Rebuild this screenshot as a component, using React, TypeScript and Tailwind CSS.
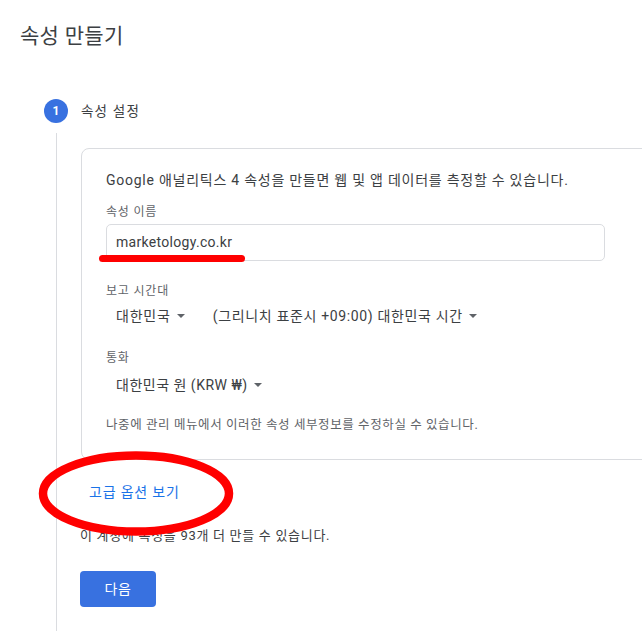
import React from 'react'

const font = { fontFamily: 'Roboto, "Noto Sans CJK KR", sans-serif' }

function Caret() {
  return (
    <svg width="8" height="4" viewBox="0 0 8 4" className="ml-1.5 inline-block">
      <path d="M0 0 L8 0 L4 4 Z" fill="#5f6368" />
    </svg>
  )
}

export default function App() {
  return (
    <div
      className="relative w-[642px] h-[631px] overflow-hidden bg-white text-[#202124]"
      style={font}
    >
      <h1 className="pl-5 pt-[22px] text-[21px] leading-[28px] tracking-[0.3px] font-normal text-[#3c4043]">
        속성 만들기
      </h1>

      <div className="flex mt-[49px]">
        <div className="ml-[44px] w-6 flex flex-col items-center">
          <div className="w-6 h-6 rounded-full bg-[#3871e0] text-white text-[12px] font-bold flex items-center justify-center">
            1
          </div>
          <div className="mt-2.5 w-px h-[500px] bg-[#dadce0]" />
        </div>

        <div className="ml-[13px] flex-1">
          <div className="h-6 flex items-center text-[13.5px] tracking-[1.2px] text-[#3c4043]">속성 설정</div>

          <div className="mt-[25px] w-[600px] border border-[#dadce0] rounded-tl-lg rounded-bl-lg pl-6 pt-[21px] pb-[26px]">
            <p className="text-[14px] leading-5 tracking-[0.75px] text-[#3c4043]">
              Google 애널리틱스 4 속성을 만들면 웹 및 앱 데이터를 측정할 수 있습니다.
            </p>

            <div className="mt-[14px] text-[12px] leading-4 tracking-[0.8px] text-[#5f6368]">속성 이름</div>
            <div className="relative mt-[4px] w-[499px] h-[37px] border border-[#dadce0] rounded-[5px] flex items-center pl-[9px] text-[14px] tracking-[0.3px] text-[#3c4043]">
              marketology.co.kr
              <div className="absolute left-[-8px] top-[30px] w-[146px] h-[7px] rounded-full bg-[#ff0000]" />
            </div>

            <div className="mt-[22px] text-[12px] leading-4 tracking-[0.8px] text-[#5f6368]">보고 시간대</div>
            <div className="mt-[7px] flex items-center pl-[10px] text-[14px] leading-5 text-[#3c4043]">
              <span className="tracking-[0.8px]">대한민국</span>
              <Caret />
              <span className="ml-[28px] tracking-[0.65px]">(그리니치 표준시 +09:00) 대한민국 시간</span>
              <Caret />
            </div>

            <div className="mt-[24px] text-[12px] leading-4 tracking-[0.8px] text-[#5f6368]">통화</div>
            <div className="mt-[9px] flex items-center pl-[10px] text-[14px] leading-5 text-[#3c4043]">
              <span className="tracking-[0.5px]">대한민국 원 (KRW ₩)</span>
              <Caret />
            </div>

            <p className="mt-[22px] text-[12.5px] leading-4 tracking-[0.6px] text-[#5f6368]">
              나중에 관리 메뉴에서 이러한 속성 세부정보를 수정하실 수 있습니다.
            </p>
          </div>

          <div className="mt-[22px] ml-2 text-[14px] leading-5 tracking-[0.8px] text-[#1a73e8]">고급 옵션 보기</div>

          <p className="mt-[24px] -ml-px text-[13px] leading-5 tracking-[0.7px] text-[#3c4043]">
            이 계정에 속성을 93개 더 만들 수 있습니다.
          </p>

          <button className="mt-[25px] -ml-px w-[76px] h-9 rounded bg-[#3871e0] text-white text-[14px] tracking-[0.5px]">
            다음
          </button>
        </div>
      </div>

      <svg className="absolute left-[36px] top-[449px]" width="202" height="90" viewBox="0 0 202 90">
        <ellipse cx="100" cy="44.5" rx="93" ry="38" fill="none" stroke="#ff0000" strokeWidth="8.5" />
      </svg>
    </div>
  )
}
